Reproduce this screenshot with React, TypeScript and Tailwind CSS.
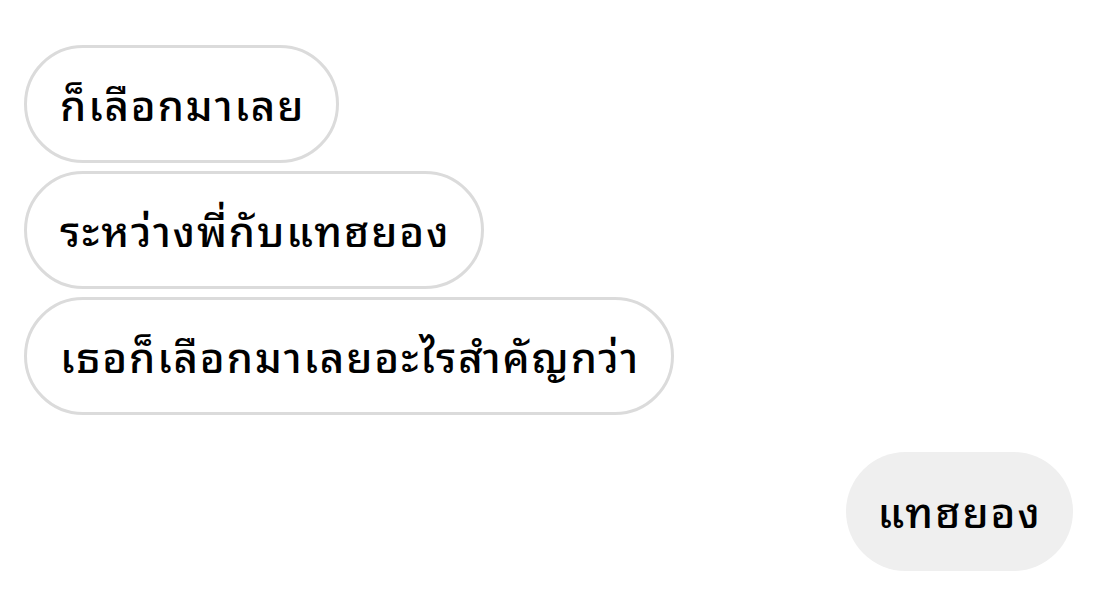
const messages = [
  "ก็เลือกมาเลย",
  "ระหว่างพี่กับแทฮยอง",
  "เธอก็เลือกมาเลยอะไรสำคัญกว่า",
];

export default function App() {
  return (
    <div className="w-[1098px] h-[592px] bg-white overflow-hidden pt-[45px] px-6 font-['Noto_Sans_Thai_Looped','Noto_Sans_Thai',sans-serif] text-black">
      <div className="flex flex-col items-start gap-[8px]">
        {messages.map((m) => (
          <div
            key={m}
            className="h-[118px] flex items-center pl-[33px] pr-[31px] pb-[4px] rounded-full border-[3px] border-[#dbdbdb] text-[42px] font-medium tracking-[0.045em]"
          >
            {m}
          </div>
        ))}
      </div>
      <div className="flex justify-end mt-[37px] pr-[1px]">
        <div className="h-[119px] w-[227px] flex items-center justify-center pb-[4px] rounded-full bg-[#efefef] text-[42px] font-medium tracking-[0.045em]">
          แทฮยอง
        </div>
      </div>
    </div>
  );
}
